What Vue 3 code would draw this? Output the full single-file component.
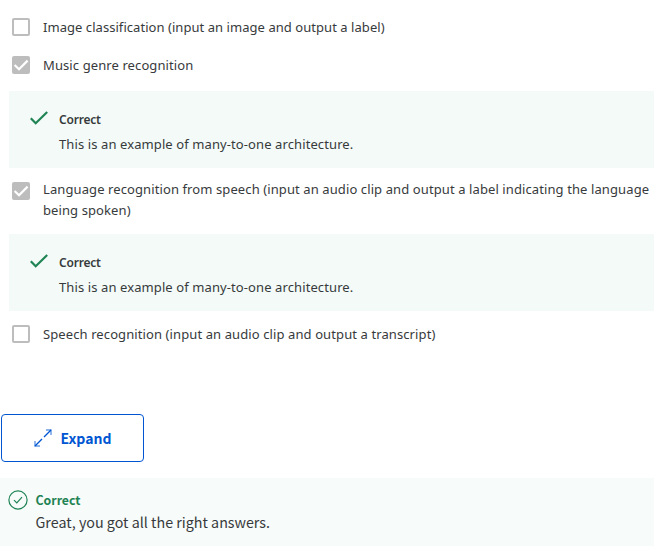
<script setup>
const options = [
  { id: 'image', lines: ['Image classification (input an image and output a label)'], checked: false },
  { id: 'music', lines: ['Music genre recognition'], checked: true, feedback: 'This is an example of many-to-one architecture.' },
  {
    id: 'language',
    lines: ['Language recognition from speech (input an audio clip and output a label indicating the language', 'being spoken)'],
    checked: true,
    feedback: 'This is an example of many-to-one architecture.',
  },
  { id: 'speech', lines: ['Speech recognition (input an audio clip and output a transcript)'], checked: false },
]
</script>

<template>
  <main class="quiz">
    <section class="options">
      <div v-for="option in options" :key="option.id" class="option" :class="option.id">
        <div class="choice">
          <span class="box" :class="{ checked: option.checked }">
            <svg v-if="option.checked" width="18" height="18" viewBox="0 0 18 18">
              <path d="M2.6 9 7 13.2 15.6 4.6" fill="none" stroke="#fff" stroke-width="2.2" />
            </svg>
          </span>
          <div class="label">
            <div v-for="line in option.lines" :key="line"><span>{{ line }}</span></div>
          </div>
        </div>
        <div v-if="option.feedback" class="feedback">
          <svg class="tick" width="18" height="14" viewBox="0 0 18 14">
            <path d="M.8 7.2 5.7 12.2 17.2 1" fill="none" stroke="#1f8354" stroke-width="2.2" />
          </svg>
          <div>
            <div class="title">Correct</div>
            <div class="message">{{ option.feedback }}</div>
          </div>
        </div>
      </div>
    </section>

    <button class="expand" type="button">
      <svg width="18" height="18" viewBox="0 0 18 18" fill="none" stroke="#0056d2">
        <path d="M10 8 17 1M8 10 1 17" stroke-width="1.4" />
        <path d="M12 1H17V6M1 12V17H6" stroke-width="1.4" opacity=".6" />
      </svg>
      <span>Expand</span>
    </button>

    <section class="result">
      <svg width="20" height="20" viewBox="0 0 20 20" fill="none" stroke="#1f8354">
        <circle cx="10" cy="10" r="9.1" stroke-width="1.2" />
        <path d="M6 10.2 8.8 13 14 7.2" stroke-width="1.2" />
      </svg>
      <div>
        <div class="result-title">Correct</div>
        <div class="result-message">Great, you got all the right answers.</div>
      </div>
    </section>
  </main>
</template>

<style>
body {
  background: #fff;
}
</style>

<style scoped>
.quiz {
  height: 546px;
  box-sizing: border-box;
  padding-top: 17px;
  overflow: hidden;
  color: #373a3c;
  font-family: "Noto Sans", sans-serif;
  font-size: 13px;
}
.options {
  height: 397px;
}
.choice {
  display: flex;
  height: 38px;
  padding-left: 12px;
}
.language .choice {
  height: 66px;
}
.language .box {
  margin-top: 14px;
}
.language .label {
  padding-top: 11px;
}
.speech .choice {
  padding-top: 13px;
}
.box {
  box-sizing: border-box;
  flex: none;
  width: 18px;
  height: 18px;
  margin: 1px 13px 0 0;
  border: 2px solid #bdbdbd;
  border-radius: 2px;
}
.box.checked {
  border: 0;
  background: #bdbdbd;
}
.box svg {
  display: block;
}
.label {
  line-height: 21px;
  letter-spacing: 0.1px;
  white-space: nowrap;
}
.image .label {
  letter-spacing: 0.05px;
}
.music .choice {
  height: 36px;
}
.feedback {
  box-sizing: border-box;
  display: flex;
  height: 77px;
  margin-left: 9px;
  padding: 18px 0 0 21px;
  background: #f3faf8;
}
.tick {
  margin: 2px 11px 0 0;
}
.title {
  font-size: 12px;
  font-weight: 600;
  line-height: 21px;
  letter-spacing: -0.2px;
}
.message {
  margin-top: 4px;
  line-height: 21px;
  letter-spacing: 0.1px;
}
.expand {
  box-sizing: border-box;
  display: flex;
  align-items: center;
  gap: 8.5px;
  width: 143px;
  height: 48px;
  margin-left: 1px;
  padding: 0 0 0 32px;
  border: 1px solid #0056d2;
  border-radius: 4px;
  background: #fff;
  color: #0056d2;
  font: 700 14px/24px "Noto Sans CJK SC", sans-serif;
}
.result {
  box-sizing: border-box;
  display: flex;
  gap: 7.5px;
  height: 68px;
  margin-top: 16px;
  padding: 12px 0 0 8px;
  background: #f7fbfa;
  font-family: "Noto Sans CJK SC", sans-serif;
}
.result-title {
  color: #1f8354;
  font-size: 12.3px;
  font-weight: 700;
  line-height: 20px;
}
.result-message {
  font-size: 14.3px;
  line-height: 24px;
}
</style>
